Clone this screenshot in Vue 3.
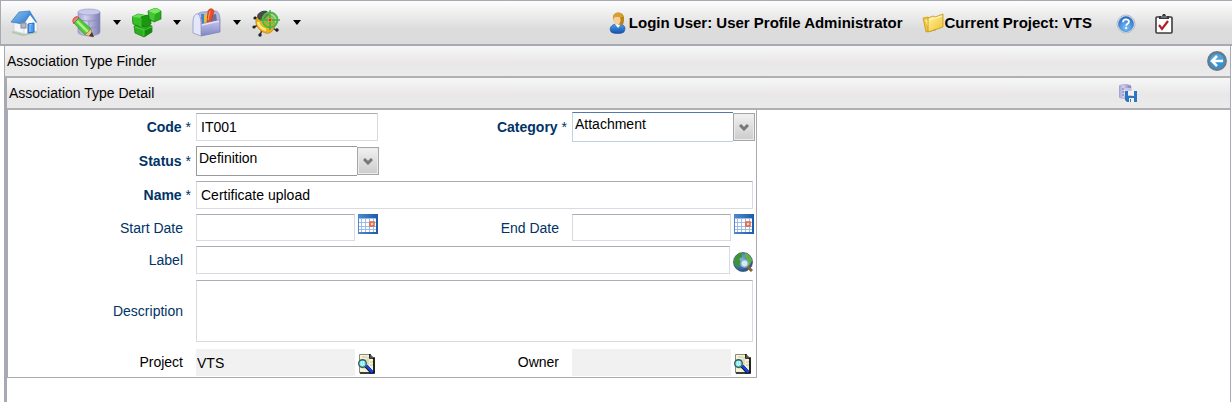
<script setup>
import { ref } from 'vue'

const code = ref('IT001')
const category = ref('Attachment')
const status = ref('Definition')
const name = ref('Certificate upload')
const startDate = ref('')
const endDate = ref('')
const label = ref('')
const description = ref('')
const project = ref('VTS')
const owner = ref('')
</script>

<template>
  <div class="page">
    <svg class="defs" width="0" height="0" aria-hidden="true">
      <defs>
        <linearGradient id="roof" x1="0" y1="0" x2="1" y2="1">
          <stop offset="0" stop-color="#8cc4f4" /><stop offset="1" stop-color="#2d78cc" />
        </linearGradient>
        <linearGradient id="drum" x1="0" x2="1">
          <stop offset="0" stop-color="#a3a3d6" /><stop offset=".35" stop-color="#d0d0ee" /><stop offset="1" stop-color="#7c7cb4" />
        </linearGradient>
        <linearGradient id="box" x1="0" y1="0" x2="0" y2="1">
          <stop offset="0" stop-color="#c6c8ec" /><stop offset="1" stop-color="#8084c2" />
        </linearGradient>
        <radialGradient id="ball" cx=".5" cy=".75" r=".7">
          <stop offset="0" stop-color="#7cc4f8" /><stop offset="1" stop-color="#2b6dc4" />
        </radialGradient>
        <radialGradient id="globe" cx=".4" cy=".35" r=".7">
          <stop offset="0" stop-color="#7fb2de" /><stop offset="1" stop-color="#1c4a80" />
        </radialGradient>
        <linearGradient id="paper" x1="0" y1="0" x2="1" y2="1">
          <stop offset="0" stop-color="#fff3a0" /><stop offset="1" stop-color="#f0c22c" />
        </linearGradient>
        <linearGradient id="shirt" x1="0" y1="0" x2="0" y2="1">
          <stop offset="0" stop-color="#4fa0ea" /><stop offset="1" stop-color="#124fae" />
        </linearGradient>
        <linearGradient id="caltop" x1="0" x2="1">
          <stop offset="0" stop-color="#4d8bd0" /><stop offset="1" stop-color="#1c5ba8" />
        </linearGradient>
        <symbol id="calendar" viewBox="0 0 20 20">
          <rect width="20" height="20" fill="url(#caltop)" />
          <rect x="1" y="4" width="17" height="14" fill="#9dbde8" />
          <path fill="#fff" d="M1 5h2v3H1zM4 5h3v3H4zM8 5h3v3H8zM12 5h3v3h-3zM16 5h2v3h-2zM1 9h2v3H1zM4 9h3v3H4zM8 9h3v3H8zM12 9h3v3h-3zM16 9h2v3h-2zM1 13h2v2H1zM4 13h3v2H4zM8 13h3v2H8zM12 13h3v2h-3zM16 13h2v2h-2zM1 16h2v2H1zM4 16h3v2H4zM8 16h3v2H8zM12 16h3v2h-3zM16 16h2v2h-2z" />
          <rect x="12" y="8" width="4" height="4" fill="#fbd0c0" stroke="#e8603c" stroke-width="1.5" />
        </symbol>
        <symbol id="lookup" viewBox="0 0 18 20">
          <path d="M1 0h12l4 4v15H1z" fill="#f6f4d4" />
          <path d="M1.500 19V.5H12" fill="none" stroke="#8a8a80" />
          <path d="M4 3h5M5 6h4M10 3v8M12 8h3M4 14h4M12 11h3" stroke="#c6c4aa" fill="none" />
          <path d="M12 0v4h4v15H2" fill="none" stroke="#000" stroke-width="1.700" />
          <path d="M12 0l4 4h-4z" fill="#555" />
          <path d="M8 12l6.500 7" stroke="#000" stroke-width="3.500" />
          <path d="M8.500 12l6 6.500" stroke="#1442f0" stroke-width="2.600" />
          <circle cx="4.500" cy="9.500" r="3.800" fill="#7ff0f4" stroke="#37585c" stroke-width="1.400" />
          <path d="M3 8h1M5 8h1M3 10h1M5 10h1M4 11h1" stroke="#fff" />
        </symbol>
      </defs>
    </svg>

    <header class="topbar">
      <nav class="tools" aria-label="Main">
        <button class="tool" type="button" aria-label="Home">
          <svg width="28" height="28" viewBox="0 0 28 28">
            <path d="M2 23l11 3 14-3" fill="none" stroke="#b4c9ac" stroke-width="2" />
            <path d="M4 13l11 2v10L4 22z" fill="#f4f5f9" stroke="#c2c4cc" stroke-width=".6" />
            <path d="M14 14l6-9 7 8v9l-13 3z" fill="#fcfcfe" stroke="#c2c4cc" stroke-width=".6" />
            <path d="M1 13L9 3l11-1-7 13z" fill="url(#roof)" stroke="#3a79bd" stroke-width=".7" />
            <path d="M20 2l7 11-1 1-6-8-6 9-1 0z" fill="#4089d8" />
            <path d="M18 15l6-1v9l-6 1z" fill="#4f9cec" stroke="#1e66bb" />
            <path d="M20 16v7M19 16l3-1" stroke="#8cc6fa" />
            <rect x="11" y="14" width="5" height="5" fill="#b4b8c2" stroke="#858a96" />
          </svg>
        </button>
        <button class="tool menu" type="button" aria-label="Data">
          <svg width="30" height="30" viewBox="0 0 30 30">
            <path d="M6 4v20c0 5 22 5 22 0V4z" fill="url(#drum)" stroke="#8a8abc" stroke-width=".6" />
            <ellipse cx="17" cy="4" rx="11" ry="3" fill="#c9c9ea" stroke="#9393c6" stroke-width=".6" />
            <path d="M6 10c2 4 20 4 22 0M6 17c2 4 20 4 22 0M17 13v13" fill="none" stroke="#8888ba" stroke-width=".8" />
            <path d="M1 14c-1-4 4-7 6-4l-5 6z" fill="#e8807c" stroke="#cc4440" />
            <path d="M2 15l5-5 12 11-6 6z" fill="#52c838" stroke="#3a9c2c" stroke-width=".8" />
            <path d="M5 13l11 11" stroke="#a8f088" stroke-width="2.500" />
            <path d="M13 27l6-6 2 8z" fill="#eec096" stroke="#b07848" stroke-width=".7" />
            <path d="M17 28l3-4 2 5z" fill="#383838" />
          </svg>
          <svg class="arrow" width="8" height="5" viewBox="0 0 8 5"><path d="M0 0h8L4 5z" /></svg>
        </button>
        <button class="tool menu" type="button" aria-label="Modules">
          <svg width="30" height="30" viewBox="0 0 30 30">
            <path d="M2 18l9-3 9 3v6l-8 5-9-4z" fill="#2cae1e" stroke="#147a0c" stroke-width=".7" />
            <path d="M12 21l8-3v6l-8 5z" fill="#128a0c" />
            <path d="M0 9l6-3 10 2v9l-7 2-8-3z" fill="#37bf27" stroke="#147a0c" stroke-width=".7" />
            <path d="M9 10l7-2v9l-7 2z" fill="#178e10" />
            <path d="M0 9l6-3 10 2-7 2z" fill="#66df50" />
            <path d="M9 9l6-2 4 2v7l-5 3-5-2z" fill="#1a9811" stroke="#117009" stroke-width=".6" />
            <path d="M9 10v9M3 19l9 3 8-3M12 22v6" fill="none" stroke="#61d64e" stroke-width=".8" />
            <path d="M16 3l8-3 5 3v8l-7 3-5-3z" fill="#28ae1b" stroke="#147a0c" stroke-width=".7" />
            <path d="M16 3l8-3 5 3-6 3z" fill="#76ea60" />
            <path d="M17 4l6 2-1 7-4-2z" fill="#48c837" />
          </svg>
          <svg class="arrow" width="8" height="5" viewBox="0 0 8 5"><path d="M0 0h8L4 5z" /></svg>
        </button>
        <button class="tool menu" type="button" aria-label="Tools">
          <svg width="30" height="30" viewBox="0 0 30 30">
            <path d="M5 8c1-3 3-4 6-4l13-1c3 1 4 5 4 9l-18 4z" fill="#b4b7dc" stroke="#8c90c0" stroke-width=".8" />
            <path d="M9 9l15-3 1 7-15 3z" fill="#6d719c" />
            <path d="M9 6h3l2 10h-3z" fill="#2e8ad0" />
            <path d="M12 7l3-1v10h-3z" fill="#eebb35" />
            <path d="M16 3c1-3 5-3 6 0l-3 11h-4z" fill="#ec4e28" stroke="#c43216" stroke-width=".6" />
            <path d="M18 3l-2 9" stroke="#ffa07c" />
            <path d="M8 16l20-4v12L9 28z" fill="url(#box)" stroke="#767ab4" stroke-width=".7" />
            <path d="M1 14c0-5 2-9 5-8 2 1 3 6 3 10v12l-8-3z" fill="#e5e6f8" stroke="#9094c6" stroke-width=".8" />
            <path d="M10 17l17-4" stroke="#e2e3fa" stroke-width="1.500" />
          </svg>
          <svg class="arrow" width="8" height="5" viewBox="0 0 8 5"><path d="M0 0h8L4 5z" /></svg>
        </button>
        <button class="tool menu" type="button" aria-label="Debug">
          <svg width="30" height="30" viewBox="0 0 30 30">
            <path d="M6 11L3 9M6 17l-4 2M10 22l-2 5M21 20l4 3" stroke="#333" stroke-width="1.500" />
            <g fill="#222"><circle cx="3" cy="10" r="1.600" /><circle cx="2" cy="19" r="1.600" /><circle cx="8" cy="27" r="1.700" /><circle cx="25" cy="22" r="1.700" /></g>
            <path d="M4 12c1-6 8-7 14-3s6 9 3 13-6 4-10 2-8-7-7-12z" fill="#efaf1c" stroke="#b87a0c" stroke-width=".7" />
            <path d="M6 14c1 5 5 7 8 8" fill="none" stroke="#ffe47c" stroke-width="2.500" />
            <path d="M5 8c1-4 6-6 10-5l3 5-9 5c-2-1-4-3-4-5z" fill="#484a4c" />
            <circle cx="18" cy="12" r="7.500" fill="#8cae4a" fill-opacity=".5" stroke="#4aba44" stroke-width="2" />
            <circle cx="18" cy="12" r="4" fill="none" stroke="#63c458" stroke-width="1.500" />
            <path d="M18 2v8M18 14v8M8 12h8M20 12h8" stroke="#3fae3b" stroke-width="1.400" />
            <circle cx="18" cy="12" r="1.200" fill="#c43a20" />
          </svg>
          <svg class="arrow" width="8" height="5" viewBox="0 0 8 5"><path d="M0 0h8L4 5z" /></svg>
        </button>
      </nav>

      <div class="session">
        <span class="info user">
          <svg width="18" height="22" viewBox="0 0 18 22">
            <path d="M1 17c1-4 4-5 8-5s7 1 7 5l-1 3c-3 2-10 2-13 0z" fill="url(#shirt)" stroke="#174f9a" stroke-width=".6" />
            <path d="M6 12l3 4 3-4z" fill="#fff" />
            <path d="M4 6c0-7 11-7 11 0 0 3 0 6-2 7-4 0-8-1-9-7z" fill="#bb8214" />
            <ellipse cx="8" cy="8" rx="3.600" ry="4.600" fill="#f7cf9e" />
            <path d="M4 6c-1-6 9-8 10-1-3 1-7-1-10 1z" fill="#d6a12c" />
          </svg>
          Login User: User Profile Administrator
        </span>
        <span class="info">
          <svg width="22" height="20" viewBox="0 0 22 20">
            <path d="M1 5l5-1 2 2 4-1 2 12-10 2z" fill="#f0c536" stroke="#c39417" stroke-width=".7" />
            <path d="M3 7l5-1v12z" fill="#fff0a0" />
            <path d="M6 5l5-2 2 1 8-3v13L6 19z" fill="url(#paper)" stroke="#c49615" stroke-width=".8" />
            <path d="M7 7l13-4" stroke="#fffad0" />
          </svg>
          Current Project: VTS
        </span>
        <button class="tool help" type="button" aria-label="Help">
          <svg width="20" height="20" viewBox="0 0 20 20">
            <circle cx="10" cy="10" r="9" fill="#e2e7ef" stroke="#b6bcc8" />
            <circle cx="10" cy="10" r="7.600" fill="url(#ball)" stroke="#417bc4" stroke-width=".6" />
            <path d="M7 8.300c0-4 6-3.600 6-.5 0 2-2.800 2-2.800 4" fill="none" stroke="#fff" stroke-width="1.700" />
            <circle cx="10.100" cy="14" r="1.100" fill="#fff" />
          </svg>
        </button>
        <button class="tool" type="button" aria-label="Tasks">
          <svg width="18" height="20" viewBox="0 0 18 20">
            <rect x="1" y="3" width="16" height="16" rx="1" fill="#fff" stroke="#3c3c40" stroke-width="1.600" />
            <path d="M4 2h3l1-2h2l1 2h3v3H4z" fill="#38383c" />
            <path d="M6 3h6" stroke="#a5a5aa" />
            <path d="M4 11l3 4 6-8" fill="none" stroke="#b3202a" stroke-width="2.200" />
          </svg>
        </button>
      </div>
    </header>

    <main class="workspace">
      <div class="bar finder">
        <h1>Association Type Finder</h1>
        <button class="tool" type="button" aria-label="Back">
          <svg width="20" height="20" viewBox="0 0 20 20">
            <circle cx="10" cy="10" r="9" fill="#3a91cf" stroke="#6f777d" stroke-width="1.800" />
            <path d="M3 10a7 7 0 0 1 14 0z" fill="#6fb0dc" opacity=".5" />
            <path d="M10 5l-5 5 5 5M5 10h11" fill="none" stroke="#fff" stroke-width="2.600" />
          </svg>
        </button>
      </div>
      <section class="detail">
        <div class="bar">
          <h2>Association Type Detail</h2>
          <button class="tool save" type="button" aria-label="Save">
            <svg width="18" height="18" viewBox="0 0 18 18">
              <path d="M0 2c2-2 10-2 12 0v11c-2 2-10 2-12 0z" fill="url(#drum)" stroke="#a0a0cc" stroke-width=".6" />
              <path d="M3 5h9M3 8h9M3 11h9" stroke="#7474a8" />
              <path d="M5 4h7v8H5z" fill="#f0f0fa" fill-opacity=".6" />
              <path d="M6 7h3v5h6V7h3v11H8l-2-2z" fill="#2e75bd" />
              <path d="M9 7h6v4H9zM10 14h5v4h-5z" fill="#f2f3f6" />
              <path d="M11 15h1v3h-1z" fill="#2e75bd" />
            </svg>
          </button>
        </div>

        <form class="form" @submit.prevent>
          <label class="required" for="code"><b>Code</b> *</label>
          <div class="field"><input id="code" v-model="code" type="text" /></div>
          <label class="required" for="category"><b>Category</b> *</label>
          <div class="combo active">
            <select id="category" v-model="category"><option>Attachment</option></select>
            <span class="drop"><svg width="10" height="7" viewBox="0 0 10 7"><path d="M1 1l4 4 4-4" /></svg></span>
          </div>

          <label class="required" for="status"><b>Status</b> *</label>
          <div class="combo">
            <select id="status" v-model="status"><option>Definition</option></select>
            <span class="drop"><svg width="10" height="7" viewBox="0 0 10 7"><path d="M1 1l4 4 4-4" /></svg></span>
          </div>

          <label class="required first" for="name"><b>Name</b> *</label>
          <div class="field wide"><input id="name" v-model="name" type="text" /></div>

          <label for="start">Start Date</label>
          <div class="field">
            <input id="start" v-model="startDate" type="text" />
            <button class="tool pick" type="button" aria-label="Pick start date"><svg width="20" height="20"><use href="#calendar" /></svg></button>
          </div>
          <label for="end">End Date</label>
          <div class="field">
            <input id="end" v-model="endDate" type="text" />
            <button class="tool pick" type="button" aria-label="Pick end date"><svg width="20" height="20"><use href="#calendar" /></svg></button>
          </div>

          <label for="label">Label</label>
          <div class="field wide">
            <input id="label" v-model="label" type="text" />
            <button class="tool low" type="button" aria-label="Translate label">
              <svg width="20" height="20" viewBox="0 0 20 20">
                <circle cx="10" cy="10" r="9.500" fill="url(#globe)" stroke="#3c5674" stroke-width=".8" />
                <path d="M2 6c2-4 4-5 7-5l0 4-3 2 2 3-3 5C1 14 0 10 2 6z" fill="#3d9434" />
                <path d="M12 1c4 1 7 4 7 8l-3 5-4-4 2-3-3-3z" fill="#62b048" />
                <path d="M14 14l5 5" stroke="#8b6138" stroke-width="3" />
                <circle cx="11.500" cy="11.500" r="3.600" fill="#e4f3fa" fill-opacity=".9" stroke="#8cb2c5" stroke-width="1.400" />
              </svg>
            </button>
          </div>

          <label for="description">Description</label>
          <div class="field wide"><textarea id="description" v-model="description"></textarea></div>

          <label class="dark" for="project">Project</label>
          <div class="field">
            <input id="project" v-model="project" class="locked" type="text" readonly />
            <button class="tool low find" type="button" aria-label="Find project"><svg width="18" height="20"><use href="#lookup" /></svg></button>
          </div>
          <label class="dark" for="owner">Owner</label>
          <div class="field">
            <input id="owner" v-model="owner" class="locked" type="text" readonly />
            <button class="tool low find" type="button" aria-label="Find owner"><svg width="18" height="20"><use href="#lookup" /></svg></button>
          </div>
        </form>
      </section>
    </main>
  </div>
</template>

<style>
html,
body {
  margin: 0;
  background: #fff;
}
</style>

<style scoped>
.page {
  display: flex;
  flex-direction: column;
  min-height: 100vh;
  box-sizing: border-box;
  font-family: "Liberation Sans", Arial, sans-serif;
  font-size: 14px;
  line-height: 18px;
  color: #000;
}
.page * {
  box-sizing: border-box;
}
.defs {
  position: absolute;
}
svg {
  display: block;
  flex: none;
}
.tool {
  display: flex;
  align-items: center;
  padding: 0;
  border: 0;
  background: none;
  color: inherit;
  font: inherit;
}
.topbar {
  display: flex;
  justify-content: space-between;
  align-items: center;
  height: 46px;
  padding: 0 59px 0 9px;
  border: 1px solid #a7a9b3;
  border-width: 1px 0 2px 1px;
  background: linear-gradient(#fdfdfd, #dcdcdc 65%, #dbdbdb);
}
.tools {
  display: flex;
  align-items: center;
}
.tools .tool + .tool {
  margin-left: 34px;
}
.tools .menu {
  gap: 11px;
}
.tools .menu + .menu {
  margin-left: 11px;
}
.session {
  display: flex;
  align-items: center;
}
.info {
  display: flex;
  align-items: center;
  font-size: 15px;
  font-weight: bold;
  white-space: nowrap;
}
.user {
  gap: 2px;
  margin-right: 20px;
}
.help {
  margin: 0 19px 0 24px;
}
.session .tool {
  padding-top: 3px;
}
.workspace {
  flex: 1;
  display: flex;
  flex-direction: column;
  margin: 0 1px 0 4px;
  border-left: 1px solid #a7a9b3;
  border-right: 1px solid #a7a9b3;
}
.bar {
  display: flex;
  align-items: center;
  height: 32px;
  padding: 0 3px 0 2px;
  border-bottom: 2px solid #b0b0b2;
  background: linear-gradient(#f7f7f7, #e9e7e8 55%, #ebebeb);
}
h1,
h2 {
  flex: 1;
  margin: 0;
  font-size: 14px;
  font-weight: normal;
}
.detail {
  flex: 1;
  border-left: 2px solid #a7a9b3;
}
.save {
  margin-right: 90px;
}
.form {
  display: grid;
  grid-template-columns: repeat(4, 183px);
  grid-template-rows: 28px 30px 28px 27px 28px 63px 29px;
  gap: 5px;
  width: fit-content;
  padding: 3px 1px 1px 0;
  border: 1px solid #a7a9b3;
  border-top: 0;
  align-items: center;
}
label {
  padding-right: 8px;
  text-align: right;
  color: #003366;
}
label.required {
  padding-right: 0;
}
label.first {
  grid-column: 1;
}
label.dark {
  color: #000;
}
.field {
  display: flex;
  gap: 3px;
  align-self: stretch;
  padding-right: 1px;
}
.wide {
  grid-column: span 3;
  padding-right: 2px;
}
input,
textarea,
select {
  flex: 1;
  min-width: 0;
  margin: 0;
  border: 1px solid #d9dbe3;
  border-top-color: #abadb3;
  border-radius: 0;
  outline: 0;
  background: #fff;
  color: #000;
  font: inherit;
}
input {
  padding: 0 4px;
}
textarea {
  align-self: flex-end;
  height: 62px;
  padding: 4px;
  resize: none;
}
input.locked {
  align-self: flex-end;
  height: 27px;
  padding: 0 1px;
  border: 0;
  background: #f1f1f1;
}
.pick {
  align-self: flex-start;
}
.low {
  align-self: flex-end;
  padding-bottom: 2px;
}
.find {
  padding-right: 2px;
}
.combo {
  display: flex;
  align-items: center;
  height: 30px;
}
select {
  height: 30px;
  padding: 0 0 6px 2px;
  border-color: #9a9a9e;
  border-right: 0;
  appearance: none;
}
.active select {
  border-color: #5577ab #b9d3e9 #b9d3e9;
}
.drop {
  display: flex;
  align-items: center;
  justify-content: center;
  width: 22px;
  height: 28px;
  border: 1px solid #a6a6a6;
  background: linear-gradient(#f1f1f1, #dedede 50%, #cccccc);
  box-shadow: inset 0 0 0 1px #ececec;
  pointer-events: none;
}
.drop path {
  fill: none;
  stroke: #777;
  stroke-width: 3;
}
</style>
